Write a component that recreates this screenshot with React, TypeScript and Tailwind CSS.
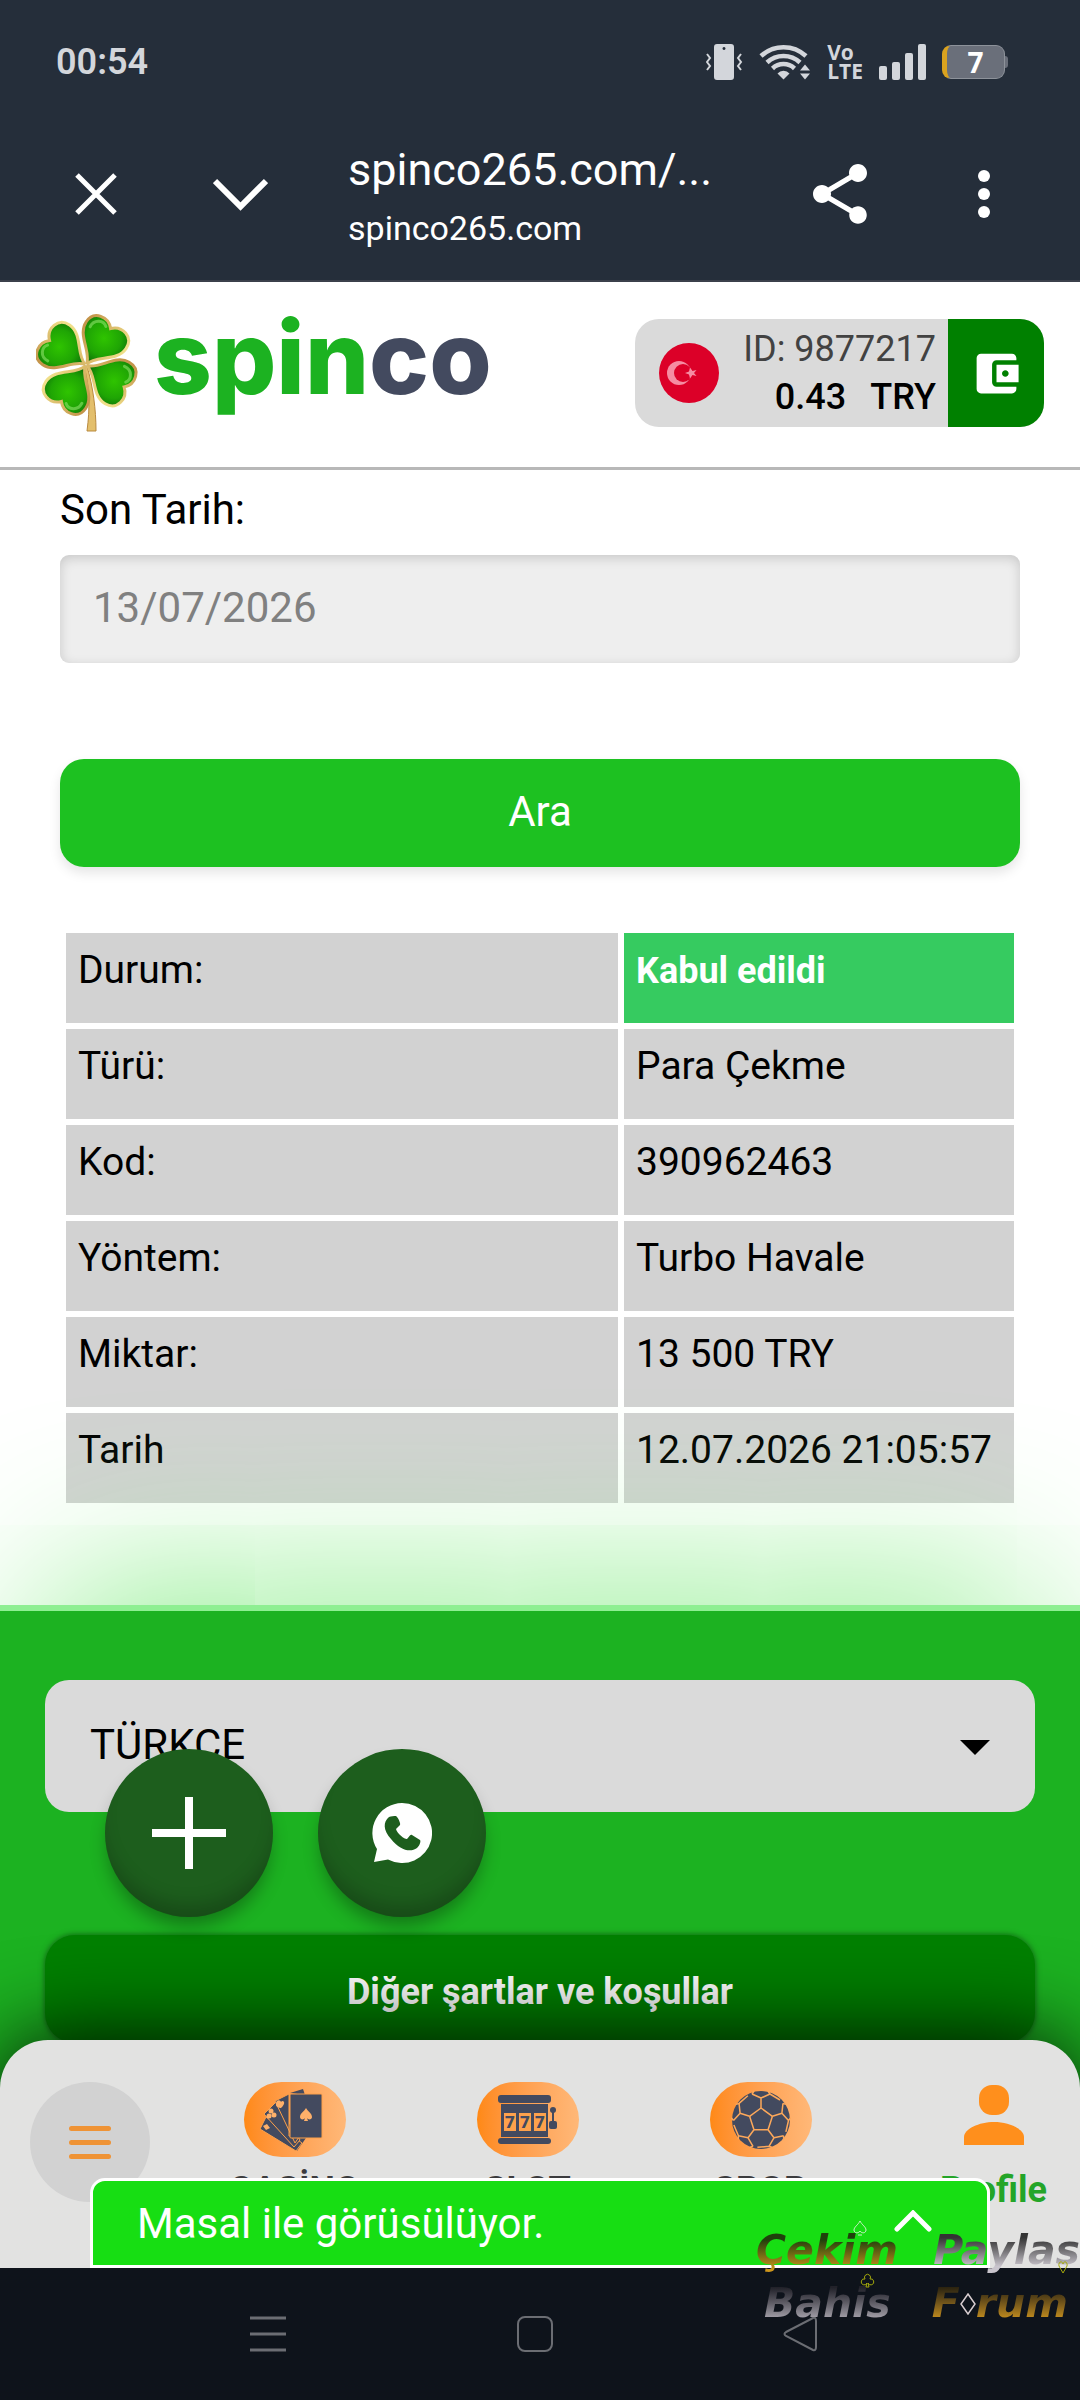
import type { ReactNode } from "react";
import { MdAccountBalanceWallet, MdShare } from "react-icons/md";

const details = [
  { label: "Durum:", value: "Kabul edildi", accepted: true },
  { label: "Türü:", value: "Para Çekme" },
  { label: "Kod:", value: "390962463" },
  { label: "Yöntem:", value: "Turbo Havale" },
  { label: "Miktar:", value: "13 500 TRY" },
  { label: "Tarih", value: "12.07.2026 21:05:57" },
];

function StatusBar() {
  return (
    <div className="flex h-[108px] items-center justify-between pt-4 pr-[72px] pl-14 text-[#d3d6db]">
      <span className="text-[36px] font-semibold">00:54</span>
      <div className="flex items-center gap-4">
        <svg width="37" height="36" viewBox="0 0 37 36" fill="currentColor">
          <path
            fillRule="evenodd"
            d="M11 0h14a3 3 0 0 1 3 3v30a3 3 0 0 1-3 3H11a3 3 0 0 1-3-3V3a3 3 0 0 1 3-3zm7 3a1.500 1.500 0 1 0 0.010 0z"
          />
          <path d="M1 10l3 4-3 4 3 4-3 4M35 10l-3 4 3 4-3 4 3 4" fill="none" stroke="currentColor" strokeWidth="2" />
        </svg>
        <svg width="52" height="36" viewBox="0 0 52 36" fill="none" stroke="currentColor" strokeWidth="4.500">
          <path d="M2 12a33 33 0 0 1 45 0" />
          <path d="M8 18.500a24 24 0 0 1 33 0" />
          <path d="M13.500 24.500a16 16 0 0 1 22 0" />
          <path d="M18.500 29.500a8 8 0 0 1 12 0l-6 6z" fill="currentColor" stroke="none" />
          <path d="M41 26.500l5-6 5 6zM41 29.500l5 6 5-6z" fill="currentColor" stroke="none" />
        </svg>
        <span className="flex flex-col font-['Open_Sans'] text-[21px] leading-[19px] font-bold">
          <span>Vo</span>
          <span>LTE</span>
        </span>
        <svg width="47" height="36" viewBox="0 0 47 36" fill="currentColor">
          <rect x="0" y="22" width="8" height="14" rx="2" />
          <rect x="13" y="18" width="8" height="18" rx="2" />
          <rect x="26" y="9" width="8" height="27" rx="2" />
          <rect x="39" y="0" width="8" height="36" rx="2" />
        </svg>
        <div className="flex items-center">
          <span className="flex h-[34px] w-[63px] items-center justify-center rounded-[9px] border border-[#8d929a] border-l-[5px] border-l-[#dba31f] bg-[#6a6f7a] font-['Open_Sans'] text-[28px] leading-8 font-bold text-white">
            7
          </span>
          <span className="h-3 w-[3px] rounded-r bg-[#6a6f7a]" />
        </div>
      </div>
    </div>
  );
}

function BrowserBar() {
  return (
    <div className="flex h-[172px] items-center text-white">
      <button aria-label="Kapat" className="ml-[75px]">
        <svg width="42" height="42" viewBox="0 0 42 42" stroke="currentColor" strokeWidth="5">
          <path d="M2 2l38 38M40 2L2 40" />
        </svg>
      </button>
      <button aria-label="Küçült" className="ml-24">
        <svg width="55" height="33" viewBox="0 0 55 33" fill="none" stroke="currentColor" strokeWidth="6">
          <path d="M2 3l25.500 25.500L53 3" />
        </svg>
      </button>
      <div className="ml-20 flex-1 pt-[10px]">
        <div className="text-[45px] leading-[58px]">spinco265.com/...</div>
        <div className="text-[34px] leading-[58px]">spinco265.com</div>
      </div>
      <button aria-label="Paylaş">
        <MdShare className="size-[72px]" />
      </button>
      <button aria-label="Menü" className="mr-[90px] ml-[102px]">
        <svg width="12" height="48" viewBox="0 0 12 48" fill="currentColor">
          <circle cx="6" cy="6" r="6" />
          <circle cx="6" cy="24" r="6" />
          <circle cx="6" cy="42" r="6" />
        </svg>
      </button>
    </div>
  );
}

const leaf = "M0 -1C-3 -14 -24 -20 -24 -36C-24 -50 -8 -53 0 -44C8 -53 24 -50 24 -36C24 -20 3 -14 0 -1Z";

function Clover() {
  return (
    <svg width="104" height="118" viewBox="0 0 104 118">
      <defs>
        <radialGradient id="leaf" cx="0.5" cy="0.35" r="0.65">
          <stop offset="0" stopColor="#2fc400" />
          <stop offset="0.55" stopColor="#1fa504" />
          <stop offset="1" stopColor="#08600a" />
        </radialGradient>
        <linearGradient id="gold" x1="0" x2="1">
          <stop offset="0" stopColor="#c4944a" />
          <stop offset="1" stopColor="#f0df8a" />
        </linearGradient>
      </defs>
      <path d="M48 52c6 22 6 42 3 65h9c0-22-3-44-9-65z" fill="#e3bf6c" stroke="#b98a3f" />
      {[34, 120, 214, 304].map((angle) => (
        <g key={angle} transform={`translate(50 51) rotate(${angle})`}>
          <path d={leaf} fill="url(#leaf)" stroke="url(#gold)" strokeWidth="3" />
          <path d="M-18 -34C-19 -43 -10 -47 -5 -43" fill="none" stroke="#8de36a" strokeWidth="3" strokeLinecap="round" opacity="0.6" />
        </g>
      ))}
    </svg>
  );
}

function Header() {
  return (
    <header className="flex h-[190px] items-center justify-between border-t-2 border-b-3 border-t-[#3b404b] border-b-[#b8b8b8] bg-white px-9 pb-[3px]">
      <a href="#" className="flex items-center gap-[14px]">
        <Clover />
        <span className="pb-8 font-['Inter'] text-[101px] leading-[102px] font-extrabold text-[#1cb221]">
          spin<span className="text-[#434a5f]">co</span>
        </span>
      </a>
      <div className="flex h-[108px] overflow-hidden rounded-[24px] bg-[#dadada]">
        <div className="flex items-center gap-6 pr-3 pl-6">
          <svg width="60" height="60" viewBox="0 0 60 60">
            <circle cx="30" cy="30" r="30" fill="#dc0028" />
            <circle cx="20" cy="30" r="12" fill="#f58ca2" />
            <circle cx="24" cy="30" r="9" fill="#dc0028" />
            <path d="M26 30l4-1.500 1-4 2.500 3.500 4-1-2.500 3 2.500 3-4-1-2.500 3.500-1-4z" fill="#f58ca2" />
          </svg>
          <div className="text-right text-[36px] leading-[48px]">
            <div className="text-[#424242]">ID: 9877217</div>
            <div className="flex justify-end gap-6 font-medium text-black">
              <span>0.43</span>
              <span>TRY</span>
            </div>
          </div>
        </div>
        <button aria-label="Cüzdan" className="flex w-24 items-center justify-center bg-[#008000] text-white">
          <MdAccountBalanceWallet className="size-[53px]" />
        </button>
      </div>
    </header>
  );
}

function SearchForm() {
  return (
    <form className="text-[42px] leading-[48px]" onSubmit={(e) => e.preventDefault()}>
      <label htmlFor="end-date" className="block">
        Son Tarih:
      </label>
      <input
        id="end-date"
        readOnly
        value="13/07/2026"
        className="mt-[21px] h-[108px] w-full rounded-[9px] bg-[#eeeeee] px-[33px] pb-1 text-[#808080] shadow-[inset_0_3px_12px_rgba(0,0,0,0.16)] outline-none"
      />
      <button
        type="submit"
        className="mt-24 h-[108px] w-full rounded-[24px] bg-[#1dc121] pb-0.5 text-white shadow-[0_6px_12px_rgba(0,0,0,0.1)]"
      >
        Ara
      </button>
    </form>
  );
}

function DetailsTable() {
  return (
    <table className="mt-[60px] w-full table-fixed border-separate border-spacing-[6px] text-left text-[39px] leading-[46px]">
      <tbody>
        {details.map((row) => (
          <tr key={row.label} className="h-[90px] align-top">
            <th scope="row" className="w-[552px] bg-[#d2d2d2] px-3 pt-[14px] font-normal">
              {row.label}
            </th>
            {row.accepted ? (
              <td className="bg-[#36cb60] px-3 pt-[15px] text-[36px] font-bold text-white">{row.value}</td>
            ) : (
              <td className="bg-[#d2d2d2] px-3 pt-[14px]">{row.value}</td>
            )}
          </tr>
        ))}
      </tbody>
    </table>
  );
}

function FloatingButton({ label, children }: { label: string; children: ReactNode }) {
  return (
    <button
      aria-label={label}
      className="flex size-[168px] items-center justify-center rounded-full bg-[#1d5e1d] text-white shadow-[0_12px_18px_-3px_rgba(0,0,0,0.32),inset_0_-18px_18px_-6px_rgba(0,0,0,0.2)]"
    >
      {children}
    </button>
  );
}

function Footer() {
  return (
    <footer className="relative mt-24 border-t-6 border-[#8eef92] bg-[#1cb221] px-[45px] pt-[69px] pb-12 shadow-[0_-63px_180px_-45px_#90ee90]">
      <div className="relative">
        <select
          aria-label="Dil"
          className="h-[132px] w-full appearance-none rounded-[24px] bg-[#dadada] px-[45px] pb-1 text-[42px] text-black"
        >
          <option>TÜRKÇE</option>
        </select>
        <svg className="pointer-events-none absolute top-[60px] right-[45px]" width="30" height="15" viewBox="0 0 30 15">
          <path d="M0 0h30L15 15z" />
        </svg>
        <div className="absolute top-[69px] left-[60px] flex gap-[45px]">
          <FloatingButton label="Ekle">
            <svg width="74" height="72" viewBox="0 0 74 72" stroke="currentColor" strokeWidth="8">
              <path d="M37 0v72M0 36h74" />
            </svg>
          </FloatingButton>
          <FloatingButton label="WhatsApp">
            <svg width="60" height="60" viewBox="0 0 60 60">
              <path d="M30 0a30 30 0 1 1-14 56.500L2 59l3-13A30 30 0 0 1 30 0z" fill="#fff" />
              <path
                d="M17 14c-6 5-6 13 2 22 9 11 19 14 26 9 3-3 4-7 3-8l-8-5c-1-1-2 0-5 4-1 1-10-5-11-10l4-4c1-1-2-8-4-9-2 0-5 0-7 1z"
                fill="#1d5e1d"
              />
            </svg>
          </FloatingButton>
        </div>
      </div>
      <button className="mt-[123px] h-[108px] w-full rounded-[30px] bg-[#008000] pt-[6px] text-[36px] font-bold text-white shadow-[0_0_6px_rgba(0,0,0,0.5)]">
        Diğer şartlar ve koşullar
      </button>
    </footer>
  );
}

function CardsIcon() {
  return (
    <svg width="70" height="62" viewBox="0 0 70 62" fill="#434a5f" stroke="#fda04a">
      <path d="M30 4L43 0l2 6z" stroke="none" />
      <path d="M48 46L37 62l-8-12z" stroke="none" />
      <path d="M0 40L6 28l36 26-6 8z" />
      <path d="M4 25L16 13l24 38-6 7z" />
      <path d="M15 12L29 5v42l10 1-4 6z" />
      <rect x="30" y="5" width="32" height="44" rx="1" />
      <g fill="#fdb06a" stroke="none">
        <path d="M46 19c-2 4-6 5-6 9 0 3 4 3 5 1l-1 3h4l-1-3c1 2 5 2 5-1 0-4-4-5-6-9z" />
        <path d="M17 12c2-2 4 0 4 1 1-2 4-1 3 2-1 2-2 3-3 4-2 0-5-1-5-3 0-2 0-3 1-4z" />
        <circle cx="11" cy="22" r="2.500" />
        <circle cx="14" cy="26" r="2.500" />
        <circle cx="9" cy="27" r="2.500" />
        <path d="M3 37l4-2 3 4-4 2z" />
      </g>
    </svg>
  );
}

function SlotIcon() {
  return (
    <svg width="60" height="50" viewBox="0 0 60 50" fill="#434a5f">
      <rect x="0" y="0" width="53" height="8" rx="3" />
      <path d="M3 9h47v33H3z" />
      <rect x="0" y="43" width="53" height="6" rx="3" />
      <rect x="51" y="26" width="8" height="8" rx="2" />
      <path d="M54 16h2v10h-2z" />
      <circle cx="55" cy="15" r="3" />
      {[5, 20, 35].map((x) => (
        <g key={x}>
          <rect x={x + 1} y="18" width="12" height="18" fill="#fda14c" />
          <text x={x + 7} y="33" textAnchor="middle" className="font-['Roboto'] text-[17px] font-black">
            7
          </text>
        </g>
      ))}
    </svg>
  );
}

function BallIcon() {
  return (
    <svg width="60" height="60" viewBox="-30 -30 60 60">
      <circle r="29" fill="#434a5f" />
      {[0, 72, 144, 216, 288].map((angle) => (
        <path
          key={angle}
          transform={`rotate(${angle})`}
          d="M0 -12L11.400 -3.700M0 -12V-22M0 -22L9 -26M0 -22L-9 -26M9 -26L19 -20M9 -26L7 -29M-9 -26L-7 -29"
          fill="none"
          stroke="#fda85a"
          strokeWidth="1.500"
        />
      ))}
    </svg>
  );
}

function NavItem({ label, children }: { label: string; children: ReactNode }) {
  return (
    <a href="#" className="flex flex-col items-center gap-3 text-[36px] leading-[42px] font-bold text-[#3c3c3e]">
      <span className="flex h-[75px] w-[102px] items-center justify-center rounded-[38px] bg-linear-to-r from-[#ff8914] to-[#ffb878]">
        {children}
      </span>
      {label}
    </a>
  );
}

function BottomNav() {
  return (
    <nav className="relative -mt-[51px] h-[228px] rounded-t-[48px] bg-[#e2e2e1] pt-[42px] shadow-[0_0_90px_rgba(0,0,0,0.95)]">
      <div className="grid grid-cols-[178px_1fr_1fr_1fr_203px]">
        <button aria-label="Menü" className="ml-[30px] flex size-[120px] items-center justify-center rounded-full bg-[#d2d2d2]">
          <svg width="42" height="33" viewBox="0 0 42 33" fill="#ef9335">
            <rect width="42" height="5" rx="2.500" />
            <rect y="14" width="42" height="5" rx="2.500" />
            <rect y="28" width="42" height="5" rx="2.500" />
          </svg>
        </button>
        <NavItem label="CASİNO">
          <CardsIcon />
        </NavItem>
        <NavItem label="SLOT">
          <SlotIcon />
        </NavItem>
        <NavItem label="SPOR">
          <BallIcon />
        </NavItem>
        <a href="#" className="flex flex-col items-center gap-3 pl-[30px] text-[36px] leading-[42px] font-bold text-[#24a528]">
          <span className="flex h-[75px] items-start pt-[3px]">
            <svg width="60" height="60" viewBox="0 0 60 60" fill="#ff8f1c">
              <rect x="15" y="0" width="30" height="30" rx="13" />
              <path d="M0 60V52c0-8 15-15 30-15s30 7 30 15v8z" />
            </svg>
          </span>
          Profile
        </a>
      </div>
      <button className="absolute inset-x-[90px] bottom-0 flex h-[90px] items-center justify-between rounded-t-[15px] border-3 border-white bg-[#17de13] pr-[55px] pl-11 text-[42px] text-white">
        Masal ile görüsülüyor.
        <svg className="mb-1" width="38" height="22" viewBox="0 0 38 22" fill="none" stroke="#fff" strokeWidth="5" strokeLinecap="round">
          <path d="M3 19L19 3l16 16" />
        </svg>
      </button>
    </nav>
  );
}

function SystemBar() {
  return (
    <div className="relative grid h-[132px] grid-cols-[1fr_267px_1fr] items-center bg-[#0e131b] pr-2.5 text-[#6b6d73]">
      <button aria-label="Son uygulamalar" className="justify-self-end pr-[116px]">
        <svg width="36" height="36" viewBox="0 0 36 36" stroke="currentColor" strokeWidth="3">
          <path d="M0 2h36M0 18h36M0 34h36" />
        </svg>
      </button>
      <button aria-label="Ana ekran" className="justify-self-center">
        <svg width="36" height="36" viewBox="0 0 36 36" fill="none" stroke="currentColor" strokeWidth="2">
          <rect x="1" y="1" width="34" height="34" rx="7" />
        </svg>
      </button>
      <button aria-label="Geri" className="justify-self-start pl-[114px]">
        <svg width="36" height="36" viewBox="0 0 36 36" fill="none" stroke="currentColor" strokeWidth="2">
          <path d="M3 16L30 2q3-1 3 3v26q0 4-3 3L3 20q-3-2 0-4z" />
        </svg>
      </button>
    </div>
  );
}

function Watermark() {
  return (
    <div className="pointer-events-none absolute right-0 bottom-[70px] w-[324px] font-['DejaVu_Sans'] text-[41px] leading-[53px] font-bold italic">
      <div className="flex justify-between">
        <span className="bg-linear-to-b from-[#20400c] from-30% to-[#d69a1c] to-90% bg-clip-text text-transparent">Çekim</span>
        <span className="bg-linear-to-b from-[#333333] from-25% to-[#c8c4cc] to-80% bg-clip-text text-transparent">Paylas</span>
      </div>
      <div className="flex justify-between pr-3 pl-2">
        <span className="bg-linear-to-b from-[#22222a] from-20% to-[#b5b1ba] to-85% bg-clip-text text-transparent">Bahis</span>
        <span className="flex items-center bg-linear-to-b from-[#2c2410] from-20% to-[#d69a1c] to-85% bg-clip-text text-transparent">
          F
          <svg width="16" height="22" viewBox="0 0 16 22" fill="none" stroke="#d8cdd0" strokeWidth="1.500">
            <path d="M8 1l7 10-7 10-7-10z" />
          </svg>
          rum
        </span>
      </div>
      <svg className="absolute -top-1 left-[97px]" width="14" height="16" viewBox="0 0 14 16" fill="none" stroke="#c9f2c6">
        <path d="M7 1C5 5 1 7 1 10c0 3 4 4 6 1 2 3 6 2 6-1 0-3-4-5-6-9zM5 15h4" />
      </svg>
      <svg className="absolute top-12 left-[104px]" width="15" height="16" viewBox="0 0 15 16" fill="none" stroke="#a3a80c">
        <path d="M5 7a3 3 0 1 1 5 0 3 3 0 1 1-2 4l1 4H6l1-4a3 3 0 1 1-2-4z" />
      </svg>
      <svg className="absolute top-9 right-3" width="10" height="14" viewBox="0 0 10 14" fill="none" stroke="#a3a80c">
        <path d="M5 13L1 6c-1-4 3-6 4-2 1-4 5-2 4 2z" />
      </svg>
    </div>
  );
}

export default function App() {
  return (
    <div className="relative overflow-hidden bg-white font-['Roboto',sans-serif] text-black">
      <div className="bg-[#252e3a]">
        <StatusBar />
        <BrowserBar />
      </div>
      <Header />
      <main className="px-[60px] pt-4">
        <SearchForm />
        <DetailsTable />
      </main>
      <Footer />
      <BottomNav />
      <SystemBar />
      <Watermark />
    </div>
  );
}
